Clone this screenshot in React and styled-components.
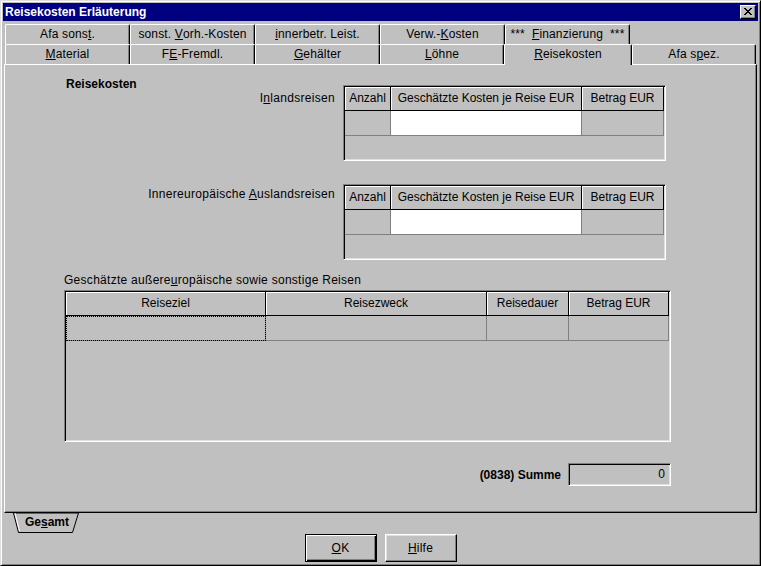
import React from 'react';
import styled, { createGlobalStyle } from 'styled-components';

const Global = createGlobalStyle`
  html, body { margin: 0; padding: 0; background: #c0c0c0; }
  body { font-family: "Liberation Sans", Arial, sans-serif; font-size: 12px; color: #000; }
  * { box-sizing: border-box; }
  u { text-underline-offset: 1px; }
`;

const Window = styled.div`
  width: 761px;
  height: 566px;
  background: #c0c0c0;
  border: 1px solid;
  border-color: #dfdfdf #000 #000 #dfdfdf;
  box-shadow: inset 1px 1px #fff, inset -1px -1px #808080;
  padding: 2px;
  display: flex;
  flex-direction: column;
`;

const TitleBar = styled.div`
  height: 18px;
  background: #000080;
  color: #fff;
  font-weight: bold;
  font-size: 12px;
  padding: 0 2px 0 2px;
  display: flex;
  align-items: center;
  justify-content: space-between;
`;

const CloseButton = styled.div`
  width: 16px;
  height: 14px;
  background: #c0c0c0;
  border: 1px solid;
  border-color: #fff #000 #000 #fff;
  box-shadow: inset -1px -1px #808080;
  display: flex;
  align-items: center;
  justify-content: center;
  padding-bottom: 1px;
`;

const TabStrip = styled.div`
  margin: 3px 1px 0;
  display: flex;
  flex-direction: column;
`;

const TabRow = styled.div`
  display: flex;
  height: 20px;
  padding-left: 1px;
  align-items: flex-start;
`;

const Tab = styled.div`
  width: ${p => p.$w}px;
  height: ${p => (p.$active ? 21 : 20)}px;
  background: #c0c0c0;
  border-top: 1px solid #fff;
  border-left: 1px solid #fff;
  border-right: 1px solid #000;
  box-shadow: inset -1px 0 #808080;
  border-radius: 2px 2px 0 0;
  display: flex;
  align-items: center;
  justify-content: center;
  white-space: pre;
  letter-spacing: 0.15px;
  position: relative;
  z-index: ${p => (p.$active ? 2 : 0)};
  padding-bottom: ${p => (p.$active ? 2 : 1)}px;
`;

const Panel = styled.div`
  margin: 0 1px;
  height: 449px;
  border-top: 1px solid #fff;
  border-left: 1px solid #fff;
  border-right: 1px solid #000;
  border-bottom: 1px solid #000;
  box-shadow: inset -1px -1px #808080;
  display: flex;
  flex-direction: column;
`;

const Row = styled.div`
  display: flex;
  align-items: flex-start;
  margin-top: ${p => p.$mt || 0}px;
`;

const LeftCol = styled.div`
  width: 330px;
  margin-right: 8px;
  display: flex;
  flex-direction: column;
`;

const Heading = styled.div`
  font-weight: bold;
  line-height: 14px;
  padding-left: 61px;
  margin-top: 12px;
`;

const Label = styled.div`
  line-height: 14px;
  text-align: right;
  padding-top: ${p => p.$pt || 0}px;
  white-space: nowrap;
  letter-spacing: 0.3px;
`;

const Caption = styled.div`
  line-height: 14px;
  padding-left: 59px;
  margin-top: 13px;
  letter-spacing: 0.28px;
`;

const Sunken = styled.div`
  width: ${p => p.$w}px;
  height: ${p => p.$h}px;
  margin-top: ${p => p.$mt || 0}px;
  margin-left: ${p => p.$ml || 0}px;
  border: 1px solid;
  border-color: #808080 #fff #fff #808080;
  box-shadow: inset 1px 1px #000, inset -1px -1px #dfdfdf;
  padding: 1px;
  background: #c0c0c0;
`;

const Grid = styled.div`
  display: grid;
  grid-template-columns: ${p => p.$cols};
`;

const HeadCell = styled.div`
  height: 24px;
  border-right: 1px solid #000;
  border-bottom: 1px solid #000;
  box-shadow: inset 1px 1px #fff;
  display: flex;
  align-items: center;
  justify-content: center;
  white-space: nowrap;
  overflow: hidden;
  padding-bottom: 2px;
`;

const DataCell = styled.div`
  height: 25px;
  border-right: 1px solid #808080;
  border-bottom: 1px solid #808080;
  background: ${p => (p.$white ? '#fff' : '#c0c0c0')};
  outline: ${p => (p.$focus ? '1px dotted #000' : 'none')};
  outline-offset: -1px;
`;

const SumRow = styled.div`
  width: 666px;
  margin-top: 21px;
  display: flex;
  justify-content: flex-end;
  align-items: center;
  gap: 7px;
`;

const SumLabel = styled.div`
  font-weight: bold;
  line-height: 14px;
`;

const SumField = styled.div`
  width: 103px;
  height: 23px;
  border: 1px solid;
  border-color: #808080 #fff #fff #808080;
  box-shadow: inset 1px 1px #000, inset -1px -1px #dfdfdf;
  display: flex;
  align-items: center;
  justify-content: flex-end;
  padding: 0 5px 1px 0;
`;

const SheetBar = styled.div`
  height: 20px;
  padding-left: 10px;
  display: flex;
`;

const SheetTab = styled.div`
  width: 66px;
  height: 20px;
  position: relative;
  display: flex;
  align-items: center;
  justify-content: center;
  font-weight: bold;
  padding-bottom: 3px;
  padding-left: 2px;
`;

const SheetShape = styled.svg`
  position: absolute;
  left: 0;
  top: 0;
`;

const SheetText = styled.span`
  position: relative;
`;

const ButtonRow = styled.div`
  margin-top: 1px;
  display: flex;
  justify-content: center;
  gap: 8px;
`;

const Button = styled.div`
  width: 72px;
  height: 28px;
  display: flex;
  align-items: center;
  justify-content: center;
  background: #c0c0c0;
  padding-bottom: 1px;
  letter-spacing: 0.2px;
  border: 1px solid;
  border-color: ${p => (p.$default ? '#000' : '#fff #000 #000 #fff')};
  box-shadow: ${p =>
    p.$default
      ? 'inset 1px 1px #fff, inset -1px -1px #000, inset -2px -2px #808080'
      : 'inset -1px -1px #808080, inset 1px 1px #dfdfdf'};
`;

const CloseGlyph = () => (
  <svg width="8" height="7" viewBox="0 0 8 7" shapeRendering="crispEdges">
    {[
      [0, 0, 2], [6, 0, 2],
      [1, 1, 2], [5, 1, 2],
      [2, 2, 4],
      [3, 3, 2],
      [2, 4, 4],
      [1, 5, 2], [5, 5, 2],
      [0, 6, 2], [6, 6, 2],
    ].map(([x, y, w], i) => (
      <rect key={i} x={x} y={y} width={w} height="1" fill="#000" />
    ))}
  </svg>
);

const row1 = [
  { w: 125, l: <>Afa sons<u>t</u>.</> },
  { w: 125, l: <>{'sonst. '}<u>V</u>orh.-Kosten</> },
  { w: 125, l: <><u>i</u>nnerbetr. Leist.</> },
  { w: 125, l: <>Verw.-<u>K</u>osten</> },
  { w: 125, l: <>{'***  '}<u>F</u>{'inanzierung  ***'}</> },
];

const row2 = [
  { w: 125, l: <><u>M</u>aterial</> },
  { w: 125, l: <>F<u>E</u>-Fremdl.</> },
  { w: 125, l: <><u>G</u>ehälter</> },
  { w: 124, l: <><u>L</u>öhne</> },
  { w: 128, l: <><u>R</u>eisekosten</>, active: true },
  { w: 124, l: <>Afa s<u>p</u>ez.</> },
];

const SmallTable = ({ mt }) => (
  <Sunken $w={323} $h={76} $mt={mt}>
    <Grid $cols="46px 191px 82px">
      <HeadCell>Anzahl</HeadCell>
      <HeadCell>Geschätzte Kosten je Reise EUR</HeadCell>
      <HeadCell>Betrag EUR</HeadCell>
      <DataCell />
      <DataCell $white />
      <DataCell />
    </Grid>
  </Sunken>
);

export default function App() {
  return (
    <>
      <Global />
      <Window>
        <TitleBar>
          <span>Reisekosten Erläuterung</span>
          <CloseButton>
            <CloseGlyph />
          </CloseButton>
        </TitleBar>

        <TabStrip>
          <TabRow>
            {row1.map((t, i) => (
              <Tab key={i} $w={t.w}>{t.l}</Tab>
            ))}
          </TabRow>
          <TabRow>
            {row2.map((t, i) => (
              <Tab key={i} $w={t.w} $active={t.active}>{t.l}</Tab>
            ))}
          </TabRow>
        </TabStrip>

        <Panel>
          <Row>
            <LeftCol>
              <Heading>Reisekosten</Heading>
              <Label>I<u>n</u>landsreisen</Label>
            </LeftCol>
            <SmallTable mt={20} />
          </Row>

          <Row $mt={23}>
            <LeftCol>
              <Label $pt={3}>Innereuropäische <u>A</u>uslandsreisen</Label>
            </LeftCol>
            <SmallTable mt={0} />
          </Row>

          <Caption>Geschätzte außere<u>u</u>ropäische sowie sonstige Reisen</Caption>
          <Sunken $w={607} $h={152} $mt={3} $ml={59}>
            <Grid $cols="200px 221px 82px 100px">
              <HeadCell>Reiseziel</HeadCell>
              <HeadCell>Reisezweck</HeadCell>
              <HeadCell>Reisedauer</HeadCell>
              <HeadCell>Betrag EUR</HeadCell>
              <DataCell $focus />
              <DataCell />
              <DataCell />
              <DataCell />
            </Grid>
          </Sunken>

          <SumRow>
            <SumLabel>(0838) Summe</SumLabel>
            <SumField>0</SumField>
          </SumRow>
        </Panel>

        <SheetBar>
          <SheetTab>
            <SheetShape width="66" height="20" viewBox="0 0 66 20">
              <polygon points="0.5,0 5.5,19.5 59.5,19.5 65.5,0" fill="#c0c0c0" stroke="#000" strokeWidth="1" />
              <line x1="2" y1="0" x2="6.5" y2="18" stroke="#fff" strokeWidth="1" />
            </SheetShape>
            <SheetText>Ge<u>s</u>amt</SheetText>
          </SheetTab>
        </SheetBar>

        <ButtonRow>
          <Button $default><span><u>O</u>K</span></Button>
          <Button><span><u>H</u>ilfe</span></Button>
        </ButtonRow>
      </Window>
    </>
  );
}
